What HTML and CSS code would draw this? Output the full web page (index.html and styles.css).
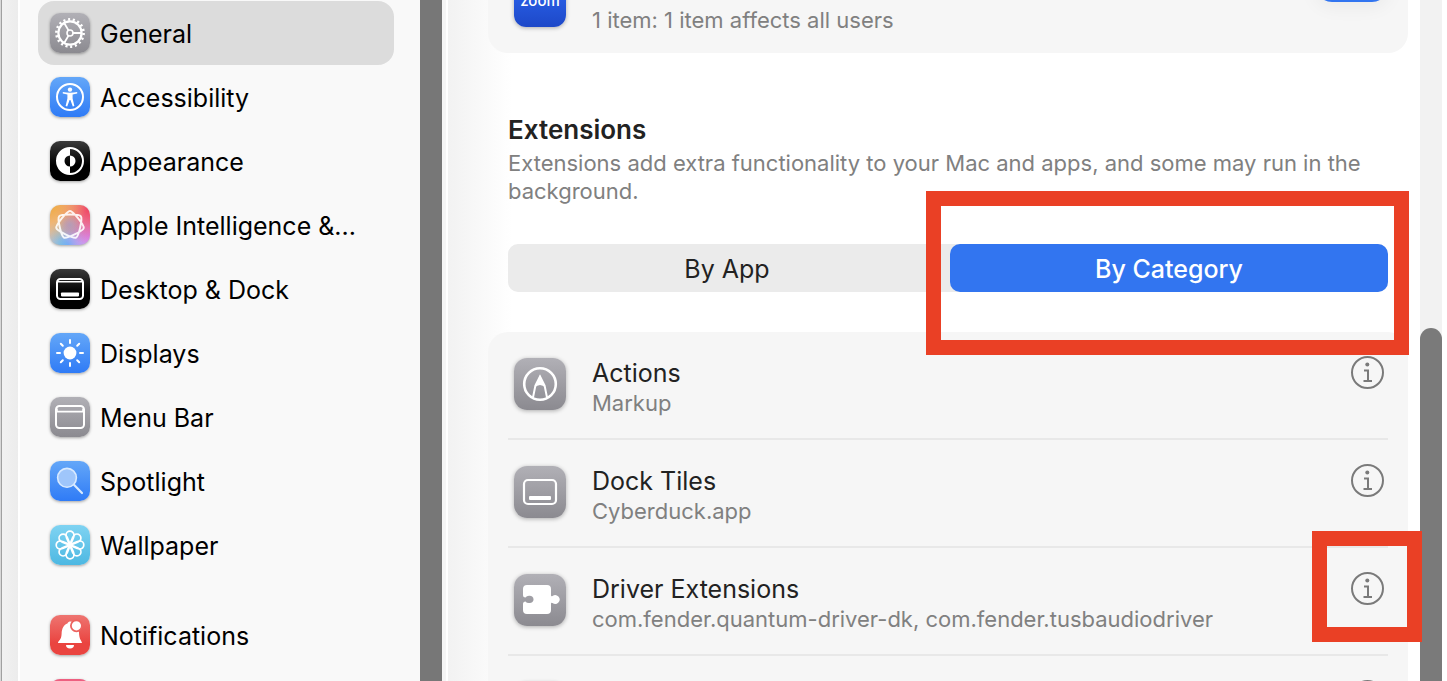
FILE: index.html
```html
<!DOCTYPE html>
<html lang="en">
<head>
    <meta charset="utf-8">
    <title>Login Items &amp; Extensions</title>
    <link rel="stylesheet" href="styles.css">
</head>
<body>
    <div class="window">
        <div class="window-edge"></div>
        <nav class="sidebar">
            <a href="#" class="nav-item selected">
                <svg class="nav-icon gray" viewBox="-20 -20 40 40">
                    <circle r="13.6" fill="none" stroke="#fff" stroke-width="2.6" stroke-dasharray="2.1 2.647"/>
                    <circle r="11.6" fill="none" stroke="#fff" stroke-width="2.2"/>
                    <circle r="3" fill="none" stroke="#fff" stroke-width="1.6"/>
                    <path d="M3 0H11M-1.5-2.6L-5.5-9.5M-1.5 2.6L-5.5 9.5" stroke="#fff" stroke-width="1.8"/>
                </svg>
                <span>General</span>
            </a>
            <a href="#" class="nav-item">
                <svg class="nav-icon blue" viewBox="-20 -20 40 40">
                    <circle r="13" fill="none" stroke="#fff" stroke-width="2"/>
                    <circle cy="-7.4" r="2.2" fill="#fff"/>
                    <path d="M-7.2-5Q0-3.600 7.2-5V-3.400L2.6-2.400V1.6L4.4 9L2.8 9.400L.4 3H-.4L-2.8 9.400L-4.4 9L-2.6 1.6V-2.400L-7.2-3.400Z" fill="#fff"/>
                </svg>
                <span>Accessibility</span>
            </a>
            <a href="#" class="nav-item">
                <svg class="nav-icon black" viewBox="-20 -20 40 40">
                    <circle r="13" fill="none" stroke="#fff" stroke-width="2"/>
                    <path d="M0-13A13 13 0 0 0 0 13V5.5A5.5 5.5 0 0 1 0-5.5Z" fill="#fff"/>
                    <path d="M0-5.5A5.5 5.5 0 0 1 0 5.5Z" fill="#fff"/>
                </svg>
                <span>Appearance</span>
            </a>
            <a href="#" class="nav-item">
                <svg class="nav-icon rainbow" viewBox="-20 -20 40 40">
                    <path d="M0-14C3-14 14.3.2 13.7 3.1S-3.4 13.9-6.1 12.6S-12.8-6.4-10.9-8.7S9.1-11.1 10.9-8.7S8.8 11.3 6.1 12.6S-13 6-13.7 3.1S-3-14 0-14Z" fill="none" stroke="#fff" stroke-width="2" stroke-opacity=".88"/>
                </svg>
                <span>Apple Intelligence &amp;...</span>
            </a>
            <a href="#" class="nav-item">
                <svg class="nav-icon black" viewBox="-20 -20 40 40">
                    <rect x="-13" y="-10" width="26" height="20" rx="3.5" fill="none" stroke="#fff" stroke-width="2"/>
                    <path d="M-12-7.2H12" stroke="#fff" stroke-width="1.6"/>
                    <rect x="-9" y="3.4" width="18" height="4" rx=".8" fill="#fff"/>
                </svg>
                <span>Desktop &amp; Dock</span>
            </a>
            <a href="#" class="nav-item">
                <svg class="nav-icon blue" viewBox="-20 -20 40 40">
                    <circle r="6.4" fill="#fff"/>
                    <path d="M0-13V-10M0 10V13M-13 0H-10M10 0H13M-9.2-9.2L-7.2-7.2M7.2 7.2L9.2 9.2M-9.2 9.2L-7.2 7.2M7.2-7.2L9.2-9.2" stroke="#fff" stroke-width="2" stroke-linecap="round"/>
                </svg>
                <span>Displays</span>
            </a>
            <a href="#" class="nav-item">
                <svg class="nav-icon gray" viewBox="-20 -20 40 40">
                    <rect x="-14" y="-11" width="28" height="22" rx="3.5" fill="none" stroke="#fff" stroke-width="2"/>
                    <path d="M-13-8.4V-5.4H13V-8.4" fill="none" stroke="#fff" stroke-width="1.6"/>
                </svg>
                <span>Menu Bar</span>
            </a>
            <a href="#" class="nav-item">
                <svg class="nav-icon blue" viewBox="-20 -20 40 40">
                    <path d="M4.2 4L12 12" stroke="#d8eaff" stroke-width="2.2" stroke-linecap="round"/>
                    <circle cx="-3" cy="-3.2" r="9.4" fill="#9fc6fb" stroke="#d8eaff" stroke-width="1.6"/>
                </svg>
                <span>Spotlight</span>
            </a>
            <a href="#" class="nav-item">
                <svg class="nav-icon cyan" viewBox="-20 -20 40 40">
                    <g fill="none" stroke="#fff" stroke-width="1.7">
                        <path id="petal" d="M0 1C-1-3-4-6-4-9.800A4 4 0 0 1 4-9.800C4-6 1-3 0 1Z"/>
                        <use href="#petal" transform="rotate(45)"/>
                        <use href="#petal" transform="rotate(90)"/>
                        <use href="#petal" transform="rotate(135)"/>
                        <use href="#petal" transform="rotate(180)"/>
                        <use href="#petal" transform="rotate(225)"/>
                        <use href="#petal" transform="rotate(270)"/>
                        <use href="#petal" transform="rotate(315)"/>
                    </g>
                </svg>
                <span>Wallpaper</span>
            </a>
            <a href="#" class="nav-item group-start">
                <svg class="nav-icon red" viewBox="-20 -20 40 40">
                    <path d="M-12 8C-12 5.8-8.6 5-8.4-1C-8.2-7-6-10-2.6-11.4C-2-13.8 1-14 3-13L9-4C8.800 5 12 5.8 12 8Z" fill="#fff"/>
                    <circle cx="6.4" cy="-9.200" r="5.500" fill="#fff" stroke="#ec6460" stroke-width="1.800"/>
                    <path d="M-4 10H4A4 3.4 0 0 1-4 10Z" fill="#fff"/>
                </svg>
                <span>Notifications</span>
            </a>
            <a href="#" class="nav-item" aria-label="Sound">
                <svg class="nav-icon pink" viewBox="-20 -20 40 40"></svg>
            </a>
        </nav>
        <div class="sidebar-scrollbar"></div>
        <div class="divider"></div>

        <main class="content">
            <section class="card login-item">
                <div class="zoom-icon">zoom</div>
                <p class="login-text">1 item: 1 item affects all users</p>
                <input type="checkbox" class="switch" aria-label="Allow in background" checked>
            </section>

            <header class="section-header">
                <h2>Extensions</h2>
                <p>Extensions add extra functionality to your Mac and apps, and some may run in the background.</p>
            </header>

            <div class="segmented">
                <button type="button">By App</button>
                <button type="button" class="active">By Category<span class="mark mark-wide"></span></button>
            </div>

            <section class="card">
                <div class="row">
                    <svg class="row-icon" viewBox="-26 -26 52 52">
                        <circle r="15.8" fill="none" stroke="#fff" stroke-width="2.6"/>
                        <path d="M-7 13.5L-4.6 1.5L0-7.5L4.6 1.5L7 13.5" fill="none" stroke="#fff" stroke-width="2"/>
                        <path d="M0-9L5.400 3.500Q2.800 1 0 1T-5.400 3.500Z" fill="#fff"/>
                    </svg>
                    <div class="row-text">
                        <h3>Actions</h3>
                        <p>Markup</p>
                    </div>
                    <button type="button" class="info" aria-label="Actions details">
                        <svg viewBox="0 0 33 33"><use href="#info"/></svg>
                    </button>
                </div>
                <div class="row">
                    <svg class="row-icon" viewBox="-26 -26 52 52">
                        <rect x="-16" y="-12" width="32" height="24" rx="4" fill="none" stroke="#fff" stroke-width="2.2"/>
                        <rect x="-11" y="4" width="22" height="4" rx="1" fill="#fff"/>
                    </svg>
                    <div class="row-text">
                        <h3>Dock Tiles</h3>
                        <p>Cyberduck.app</p>
                    </div>
                    <button type="button" class="info" aria-label="Dock Tiles details">
                        <svg viewBox="0 0 33 33"><use href="#info"/></svg>
                    </button>
                </div>
                <div class="row">
                    <svg class="row-icon" viewBox="-26 -26 52 52">
                        <path d="M-13-15H7Q11-15 11-11V-5Q11-3 12.500-4A4.400 4.400 0 1 1 12.500 3Q11 2 11 4V10Q11 14 7 14H-13Q-17 14-17 10V4Q-17 1.5-14.5 1.500Q-13.500 3-11 3A3.700 3.700 0 1 0-11-4.200Q-13.500-4-14.5-2.500Q-17-2.5-17-5V-11Q-17-15-13-15Z" fill="#fff"/>
                    </svg>
                    <div class="row-text">
                        <h3>Driver Extensions</h3>
                        <p>com.fender.quantum-driver-dk, com.fender.tusbaudiodriver</p>
                    </div>
                    <button type="button" class="info" aria-label="Driver Extensions details">
                        <svg viewBox="0 0 33 33"><use href="#info"/></svg>
                        <span class="mark mark-square"></span>
                    </button>
                </div>
                <div class="row">
                    <svg class="row-icon" viewBox="-26 -26 52 52"></svg>
                    <div class="row-text"></div>
                    <button type="button" class="info" aria-label="Details">
                        <svg viewBox="0 0 33 33">
                            <g id="info" fill="none" stroke="#7a7a7a">
                                <circle cx="16.5" cy="16.5" r="15.5" stroke-width="2"/>
                                <circle cx="16.3" cy="8.6" r="2" fill="#7a7a7a" stroke="none"/>
                                <path d="M13 14.5H17V25M12.5 25H21" stroke-width="2"/>
                            </g>
                        </svg>
                    </button>
                </div>
            </section>
        </main>
        <div class="scroll-track">
            <div class="scroll-thumb"></div>
        </div>
    </div>
</body>
</html>
```
FILE: styles.css
```css
* {
    box-sizing: border-box;
}

body {
    margin: 0;
    background: #fff;
    font-family: Inter, "Liberation Sans", sans-serif;
    color: #222;
}

h2, h3, p {
    margin: 0;
}

button {
    border: 0;
    padding: 0;
    background: none;
    font-family: inherit;
    color: inherit;
}

.window {
    display: flex;
    height: 100vh;
    overflow: hidden;
    padding-right: 5px;
}

.window-edge {
    flex: 0 0 20px;
    border-left: 1px solid #d8d8d8;
    border-right: 2px solid #fff;
    background: linear-gradient(to right, #a0a0a0 1px, #f1f1f1 1px, #ececec);
}

/* sidebar */
.sidebar {
    flex: 0 0 400px;
    padding: 1px 26px 0 18px;
    background: #f9f9f9;
}

.nav-item {
    display: flex;
    align-items: center;
    gap: 10px;
    height: 64px;
    padding: 0 12px;
    border-radius: 16px;
    color: #000;
    font-size: 25px;
    text-decoration: none;
    white-space: nowrap;
}

.nav-item span {
    padding-top: 2px;
}

.nav-item.selected {
    background: #dcdcdc;
}

.nav-item.group-start {
    margin-top: 26px;
}

.nav-icon {
    flex: none;
    width: 40px;
    height: 40px;
    border-radius: 10px;
    box-shadow: 0 1px 3px rgba(0, 0, 0, 0.35);
}

.gray { background: linear-gradient(#b1b0b6, #8b8a90); }
.blue { background: linear-gradient(#64a7f8, #2f7bf6); }
.black { background: linear-gradient(#3a3a3a, #000 60%); }
.cyan { background: linear-gradient(#7fd3f2, #4db8e2); }
.red { background: linear-gradient(#ee7571, #ea4440 70%); }
.pink { background: #ee5f80; }

.rainbow {
    background:
        radial-gradient(circle at 50% 50%, #b59cb8, transparent 45%),
        radial-gradient(circle at 0 0, #f0a83c, transparent 65%),
        radial-gradient(circle at 100% 10%, #f0405f, transparent 65%),
        radial-gradient(circle at 100% 80%, #d68bfa, transparent 60%),
        radial-gradient(circle at 45% 100%, #55b8f5, transparent 60%),
        #eec4b4;
}

.sidebar-scrollbar {
    flex: 0 0 22px;
    background: #777;
}

.divider {
    flex: 0 0 6px;
    border-right: 2px solid #fff;
    background: #f5f5f5;
}

/* content */
.content {
    flex: 1;
    min-width: 0;
    padding: 0 12px 0 40px;
    background: linear-gradient(to right, #f2f2f2, #fff 64px);
}

.card {
    padding: 0 20px;
    border-radius: 20px;
    background: #f6f6f6;
}

.login-item {
    display: flex;
    align-items: flex-start;
    gap: 26px;
    margin-top: -25px;
    padding: 0 20px 26px 26px;
}

.zoom-icon {
    width: 52px;
    height: 52px;
    padding-top: 16px;
    border-radius: 12px;
    background: linear-gradient(#2f6bf6, #1d48c8);
    box-shadow: 0 1px 4px rgba(0, 0, 0, 0.3);
    color: #fff;
    font-size: 15px;
    font-weight: 500;
    line-height: 20px;
    text-align: center;
}

.login-text {
    flex: 1;
    align-self: flex-end;
}

.login-text,
.row-text p,
.section-header p {
    color: #808080;
    font-size: 22px;
    line-height: 28px;
}

.login-text {
    line-height: 14px;
}

.switch {
    appearance: none;
    width: 72px;
    height: 27px;
    margin: 0;
    border-radius: 0 0 16px 16px;
    background: #3275f0;
    box-shadow: 0 4px 20px rgba(0, 0, 0, 0.06);
}

.section-header {
    padding: 60px 20px 39px;
}

.section-header h2 {
    margin-bottom: 2px;
    font-size: 26px;
    font-weight: 600;
    line-height: 34px;
}

.segmented {
    display: grid;
    grid-template-columns: 1fr 1fr;
    gap: 4px;
    height: 48px;
    margin: 0 20px 40px;
    border-radius: 10px;
    background: #ebebeb;
}

.segmented button {
    position: relative;
    padding-top: 2px;
    border-radius: 10px;
    font-size: 25px;
}

.segmented .active {
    background: #3275f0;
    color: #fff;
    font-weight: 500;
}

.row {
    display: flex;
    align-items: flex-start;
    gap: 26px;
    height: 108px;
    padding: 24px 4px 0 6px;
    border-bottom: 2px solid #e8e8e8;
}

.row-icon {
    flex: none;
    width: 52px;
    height: 52px;
    margin-top: 2px;
    border-radius: 13px;
    background: linear-gradient(#b1b0b6, #8b8a90);
    box-shadow: 0 1px 4px rgba(0, 0, 0, 0.3);
}

.row-text {
    flex: 1;
    padding-top: 1px;
}

.row-text h3 {
    font-size: 25px;
    font-weight: 400;
    line-height: 32px;
}

.info {
    position: relative;
    width: 33px;
    height: 33px;
}

.info svg {
    display: block;
}

/* red highlight boxes */
.mark {
    position: absolute;
    z-index: 1;
    border: 15px solid #ea4025;
    pointer-events: none;
}

.mark-wide {
    inset: -53px -21px -63px -24px;
}

.mark-square {
    inset: -41px -38px -37px -39px;
}

.scroll-track {
    flex: 0 0 22px;
    padding-top: 328px;
    background: #f2f2f2;
}

.scroll-thumb {
    height: 100%;
    border-radius: 11px 11px 0 0;
    background: #7a7a7a;
}
```
